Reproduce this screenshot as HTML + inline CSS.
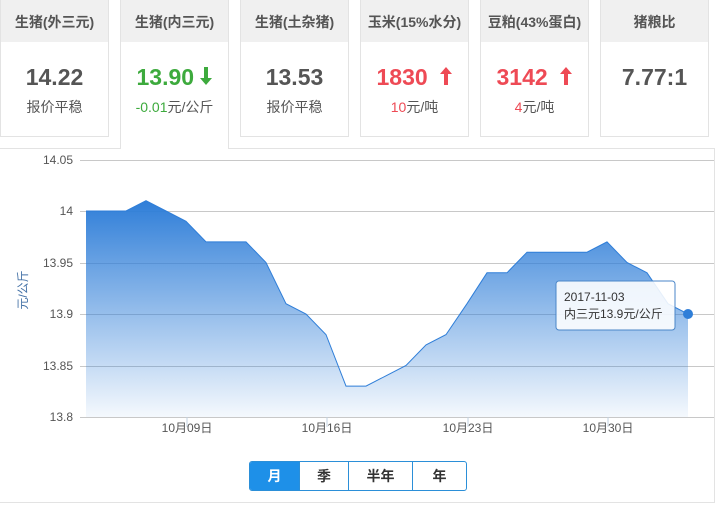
<!DOCTYPE html>
<html><head><meta charset="utf-8"><style>
body{margin:0;width:716px;height:506px;background:#fff;font-family:"Liberation Sans","Noto Sans CJK SC",sans-serif;position:relative;overflow:hidden}
.card{position:absolute;top:0;width:109px;height:137px;border:1px solid #e3e3e3;border-top:none;background:#fff;text-align:center;box-sizing:border-box}
.card .h{height:42px;background:#f0f0f0;line-height:44px;font-size:14px;color:#555;font-weight:bold}
.card .v{margin-top:22px;font-size:23px;font-weight:bold;color:#555;line-height:26px}
.card .s{margin-top:7px;font-size:14px;color:#555}
.card .g,.g{color:#3daa3d}.card .r,.r{color:#ee4a55}
.active{height:149px;border-bottom:none;z-index:2}
.panel{position:absolute;left:0;top:148px;width:715px;height:355px;border:1px solid #e3e3e3;border-left:none;box-sizing:border-box}
.btns{position:absolute;left:249px;top:461px;height:30px;display:flex;border:1px solid #2b8fd8;border-radius:3px;box-sizing:border-box;overflow:hidden}
.btns div{line-height:28px;text-align:center;font-size:14px;font-weight:bold;color:#333;border-left:1px solid #2b8fd8}
.btns div:first-child{border-left:none;background:#1e90e8;color:#fff}
</style></head><body>
<div class="card" style="left:0"><div class="h">生猪(外三元)</div><div class="v">14.22</div><div class="s">报价平稳</div></div>
<div class="card active" style="left:120px"><div class="h">生猪(内三元)</div><div class="v g">13.90 <svg width="12" height="18" viewBox="0 0 12 18"><path d="M6 18L12 11H8V0H4V11H0Z" fill="#3daa3d"/></svg></div><div class="s"><span class="g">-0.01</span>元/公斤</div></div>
<div class="card" style="left:240px"><div class="h">生猪(土杂猪)</div><div class="v">13.53</div><div class="s">报价平稳</div></div>
<div class="card" style="left:360px"><div class="h">玉米(15%水分)</div><div class="v r">1830 &nbsp;<svg width="12" height="18" viewBox="0 0 12 18"><path d="M6 0L12 7H8V18H4V7H0Z" fill="#ee4a55"/></svg></div><div class="s"><span class="r">10</span>元/吨</div></div>
<div class="card" style="left:480px"><div class="h">豆粕(43%蛋白)</div><div class="v r">3142 &nbsp;<svg width="12" height="18" viewBox="0 0 12 18"><path d="M6 0L12 7H8V18H4V7H0Z" fill="#ee4a55"/></svg></div><div class="s"><span class="r">4</span>元/吨</div></div>
<div class="card" style="left:600px"><div class="h">猪粮比</div><div class="v">7.77:1</div></div>
<div class="panel"></div>
<svg style="position:absolute;left:0;top:0" width="716" height="506">
<defs><linearGradient id="gr" x1="0" y1="0" x2="0" y2="1"><stop offset="0" stop-color="#2f7ed8"/><stop offset="1" stop-color="#2f7ed8" stop-opacity="0.05"/></linearGradient></defs>
<g stroke="#c8c8c8" stroke-width="1">
<line x1="80" y1="160.5" x2="714" y2="160.5"/><line x1="80" y1="211.5" x2="714" y2="211.5"/><line x1="80" y1="263.5" x2="714" y2="263.5"/><line x1="80" y1="314.5" x2="714" y2="314.5"/><line x1="80" y1="366.5" x2="714" y2="366.5"/><line x1="80" y1="417.5" x2="714" y2="417.5"/>
</g>
<g font-size="12" fill="#555" text-anchor="end"><text x="73" y="164">14.05</text><text x="73" y="215">14</text><text x="73" y="267">13.95</text><text x="73" y="318">13.9</text><text x="73" y="370">13.85</text><text x="73" y="421">13.8</text></g>
<text transform="translate(27,290) rotate(-90)" font-size="12" fill="#4572a7" text-anchor="middle">元/公斤</text>
<path d="M86 211L106 211L126 211L146 200.7L166 211L186 221.3L206 241.9L226 241.9L246 241.9L266 262.5L286 303.7L306 314L326 334.6L346 386.1L366 386.1L386 375.8L406 365.5L426 344.9L446 334.6L467 303.7L487 272.8L507 272.8L527 252.2L547 252.2L567 252.2L587 252.2L607 241.9L627 262.5L647 272.8L668 303.7L688 314L688 417L86 417Z" fill="url(#gr)"/>
<path d="M86 211L106 211L126 211L146 200.7L166 211L186 221.3L206 241.9L226 241.9L246 241.9L266 262.5L286 303.7L306 314L326 334.6L346 386.1L366 386.1L386 375.8L406 365.5L426 344.9L446 334.6L467 303.7L487 272.8L507 272.8L527 252.2L547 252.2L567 252.2L587 252.2L607 241.9L627 262.5L647 272.8L668 303.7L688 314" fill="none" stroke="#2f7ed8" stroke-width="1"/>
<g font-size="12" fill="#555" text-anchor="middle"><text x="187" y="432">10月09日</text><text x="327" y="432">10月16日</text><text x="468" y="432">10月23日</text><text x="608" y="432">10月30日</text></g>
<g stroke="#c0d0e0"><line x1="187" y1="417" x2="187" y2="427"/><line x1="327" y1="417" x2="327" y2="427"/><line x1="468" y1="417" x2="468" y2="427"/><line x1="608" y1="417" x2="608" y2="427"/></g>
<rect x="556" y="281" width="119" height="49" rx="3" fill="#fff" fill-opacity="0.88" stroke="#4a86c8"/>
<text x="564" y="301" font-size="12" fill="#333">2017-11-03</text>
<text x="564" y="318" font-size="12" fill="#333">内三元13.9元/公斤</text>
<circle cx="688" cy="314" r="5" fill="#2f7ed8"/>
</svg>
<div class="btns"><div style="width:49px">月</div><div style="width:48px">季</div><div style="width:63px">半年</div><div style="width:53px">年</div></div>
</body></html>
